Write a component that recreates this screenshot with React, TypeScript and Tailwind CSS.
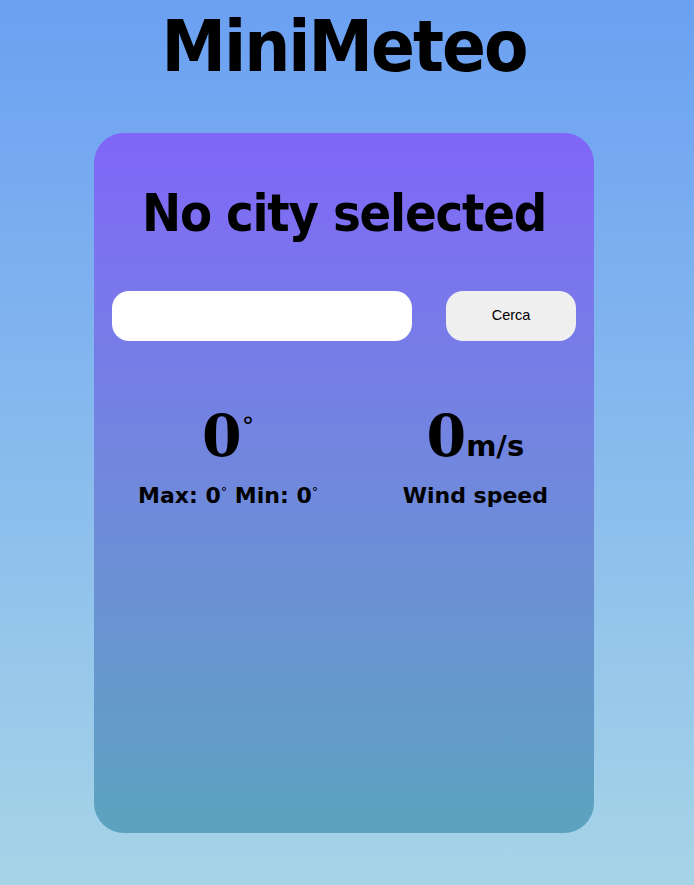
import { useState } from 'react';

const COND = "font-['DejaVu_Sans_Condensed','DejaVu_Sans',sans-serif] [font-stretch:condensed]";
const SANS = "font-['DejaVu_Sans',sans-serif]";
const SERIF = "font-['DejaVu_Serif',serif]";

export default function App() {
  const [city, setCity] = useState('');

  return (
    <div className="min-h-screen w-full bg-linear-to-b from-[#6ba0f2] to-[#a6d4e7] pr-[6px] pb-[53px]">
      <h1 className={`${COND} pt-[10px] text-center text-[72px] leading-none font-bold tracking-[-2px] text-black`}>
        MiniMeteo
      </h1>

      <div className="mx-auto mt-[51px] h-[700px] w-[500px] rounded-[30px] bg-linear-to-b from-[#8066f8] to-[#5ca3bf]">
        <h2 className={`${COND} pt-[54px] text-center text-[52px] leading-none font-bold tracking-[-1.2px] text-black`}>
          No city selected
        </h2>

        {/* search row */}
        <div className="mt-[52px] flex items-center justify-between px-[18px]">
          <input
            value={city}
            onChange={(e) => setCity(e.target.value)}
            className="h-[50px] w-[300px] rounded-[17px] bg-white px-4 outline-none"
          />
          <button className="h-[50px] w-[130px] rounded-[17px] bg-[#efefef] font-['Liberation_Sans',Arial,sans-serif] text-[14.5px] text-black">
            Cerca
          </button>
        </div>

        {/* stats */}
        <div className="mt-[66px] flex justify-between pr-[46px] pl-[44px] text-black">
          <div className="flex flex-col items-center">
            <div className="flex items-start">
              <span className={`${SERIF} text-[57px] leading-none font-bold`}>0</span>
              <span className={`${SANS} mt-[7px] text-[25px] leading-none`}>°</span>
            </div>
            <div className={`${SANS} mt-[21px] text-[22px] leading-none font-bold`}>
              Max: 0<span className="align-top text-[13px] font-normal">°</span> Min: 0
              <span className="align-top text-[13px] font-normal">°</span>
            </div>
          </div>

          <div className="flex flex-col items-center">
            <div className="flex items-baseline">
              <span className={`${SERIF} text-[57px] leading-none font-bold`}>0</span>
              <span className={`${SANS} text-[29px] leading-none font-bold`}>m/s</span>
            </div>
            <div className={`${SANS} mt-[21px] text-[22px] leading-none font-bold`}>Wind speed</div>
          </div>
        </div>
      </div>
    </div>
  );
}
